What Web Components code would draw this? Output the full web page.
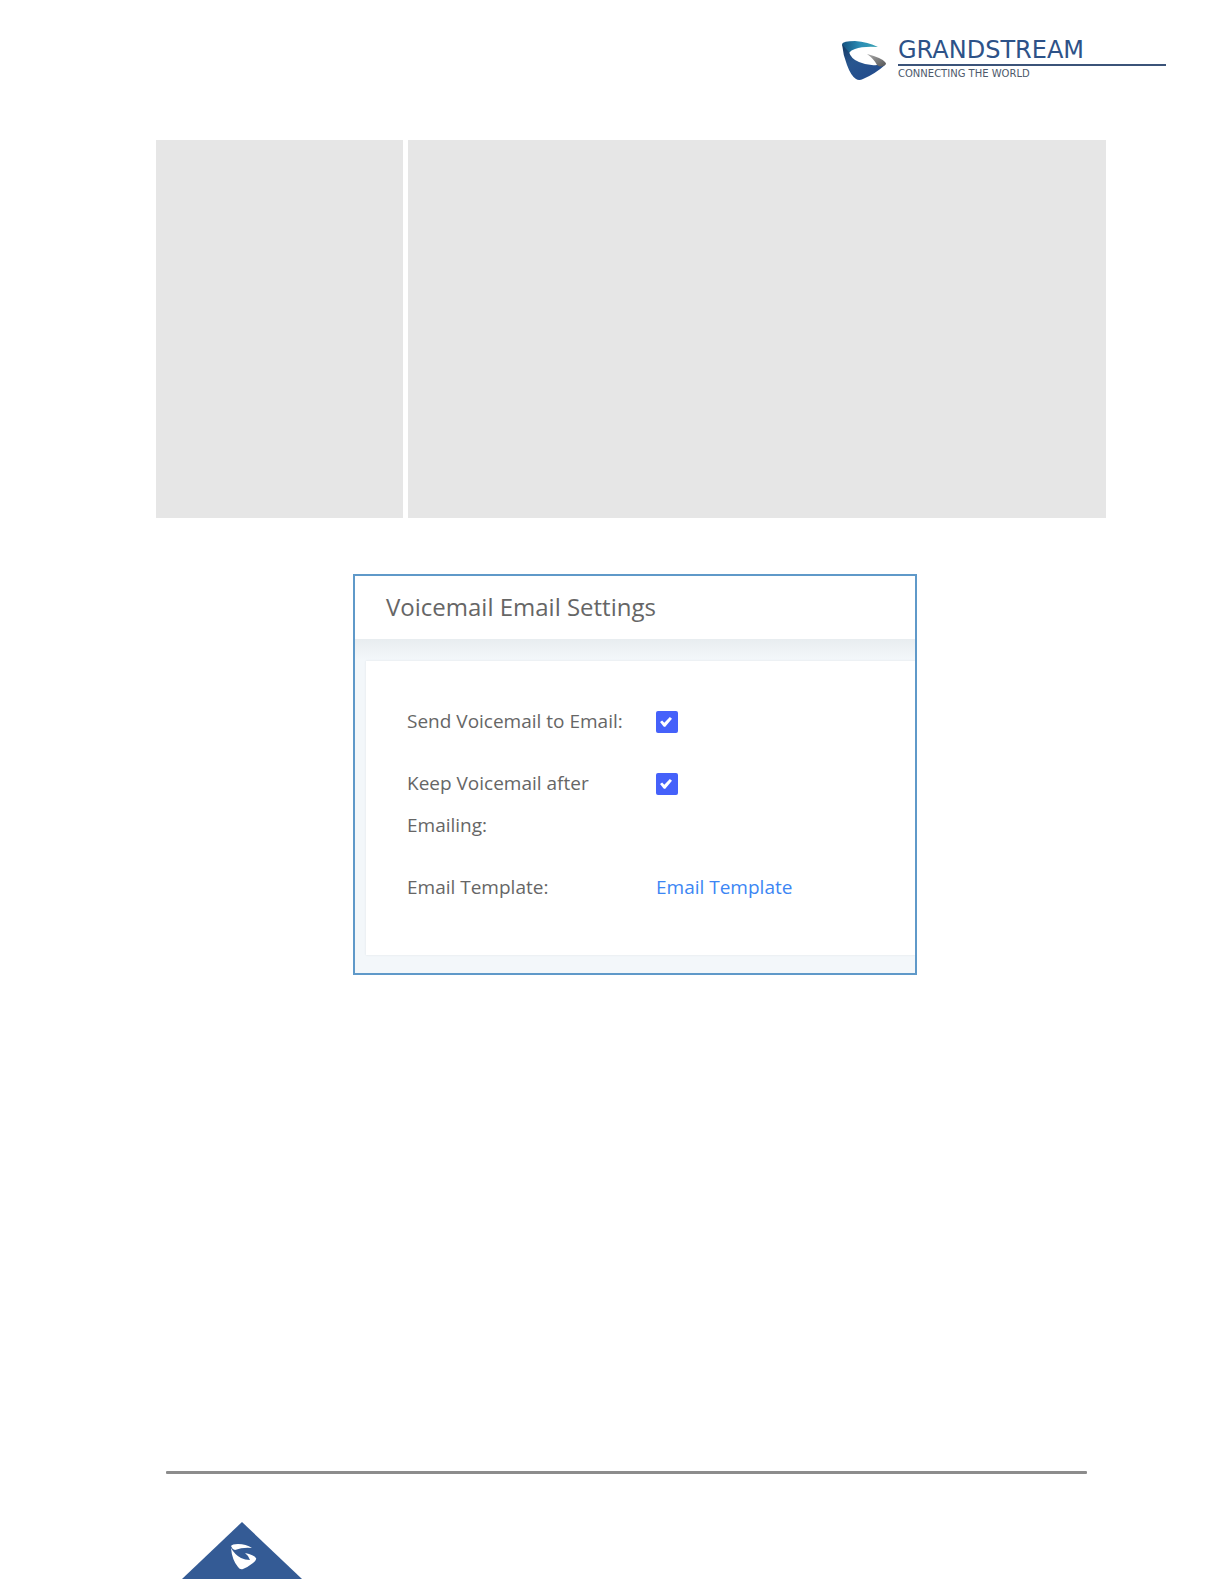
<!DOCTYPE html>
<html lang="en">
<head>
<meta charset="utf-8">
<title>Voicemail Email Settings</title>
<style>
  body {
    margin: 0;
    background: #fff;
    font-family: "Open Sans", "Noto Sans", sans-serif;
  }
</style>
</head>
<body>

<manual-page>
  <brand-logo slot="header"></brand-logo>
  <option-table></option-table>
  <settings-panel heading="Voicemail Email Settings">
    <setting-check label="Send Voicemail to Email"></setting-check>
    <setting-check label="Keep Voicemail after Emailing"></setting-check>
    <setting-link label="Email Template" text="Email Template"></setting-link>
  </settings-panel>
  <page-badge slot="footer"></page-badge>
</manual-page>

<script>
// small helper, every element here is a template in an open shadow root
function attach(el, html) {
  var template = document.createElement("template");
  template.innerHTML = html;
  el.attachShadow({mode: "open"});
  el.shadowRoot.appendChild(template.content.cloneNode(true));
}

// PAGE - header, content, footer
class ManualPage extends HTMLElement {
  constructor() {
    super();
    attach(this, `
      <style>
        :host {
          display: flex;
          flex-direction: column;
          min-height: 100vh;
        }
        header {
          display: flex;
          justify-content: flex-end;
          padding: 40px 58px 0 0;
          height: 100px;
        }
        main {
          flex: 1;
          display: flex;
          flex-direction: column;
          align-items: center;
          gap: 56px;
          padding: 0 120px 0 166px;
        }
        footer { padding: 0 137px 5px 166px; }
        hr {
          height: 3px;
          margin: 0 0 48px;
          border: 0;
          border-radius: 1px;
          background: #8c8c8c;
        }
      </style>
      <header><slot name="header"></slot></header>
      <main><slot></slot></main>
      <footer>
        <hr>
        <slot name="footer"></slot>
      </footer>
    `);
  }
}
customElements.define("manual-page", ManualPage);

// LOGO - mark, name, tagline
class BrandLogo extends HTMLElement {
  constructor() {
    super();
    attach(this, `
      <style>
        :host {
          display: flex;
          gap: 12px;
          font-family: "DejaVu Sans", sans-serif;
        }
        svg { display: block; }
        .words { width: 268px; }
        .name {
          padding-bottom: 4px;
          color: #2d5288;
          font-size: 24px;
          line-height: 20px;
          border-bottom: 2px solid #3b5379;
        }
        .tagline {
          color: #4d5a6b;
          font-size: 10px;
          line-height: 16px;
        }
      </style>
      <svg width="44" height="41" viewBox="0 0 44 41" aria-hidden="true">
        <defs>
          <linearGradient id="top" x1="0" y1="0" x2="1" y2="0">
            <stop offset="0" stop-color="#14507f"/>
            <stop offset=".5" stop-color="#2b8db5"/>
            <stop offset="1" stop-color="#3ba4b4"/>
          </linearGradient>
          <linearGradient id="side" x1="0" y1="0" x2=".7" y2="1">
            <stop offset="0" stop-color="#123760"/>
            <stop offset=".45" stop-color="#28568f"/>
            <stop offset="1" stop-color="#234b8c"/>
          </linearGradient>
          <linearGradient id="tip" x1="0" y1="0" x2="1" y2="1">
            <stop offset="0" stop-color="#aaa"/>
            <stop offset="1" stop-color="#555"/>
          </linearGradient>
        </defs>
        <path fill="url(#top)" d="M0 4Q1 1 13 1Q26 2 36 7Q21 6 13 9Q9 10 7 13Q1 9 0 4Z"/>
        <path fill="url(#side)" d="M0 4Q3 8 7 12Q9 19 17 22Q26 26 35 25L43 25Q33 34 21 39Q17 41 14 39Q9 36 5 25Q1 15 0 4Z"/>
        <path fill="url(#tip)" d="M25 14Q40 18 43 22Q45 24 43 25Q39 28 35 25Q32 19 25 14Z"/>
      </svg>
      <div class="words">
        <div class="name">GRANDSTREAM</div>
        <div class="tagline">CONNECTING THE WORLD</div>
      </div>
    `);
  }
}
customElements.define("brand-logo", BrandLogo);

// TABLE - option name on the left, description on the right
class OptionTable extends HTMLElement {
  constructor() {
    super();
    attach(this, `
      <style>
        :host {
          display: block;
          align-self: stretch;
          margin: 0 -2px 0 -10px;
        }
        table {
          width: 100%;
          border-collapse: collapse;
          table-layout: fixed;
        }
        td {
          height: 378px;
          padding: 0;
          background: #e6e6e6;
          background-clip: padding-box;
        }
        td:first-child { width: 26%; }
        td + td { border-left: 5px solid #fff; }
      </style>
      <table><tbody><tr><td></td><td></td></tr></tbody></table>
    `);
  }
}
customElements.define("option-table", OptionTable);

// PANEL - framed settings screen
class SettingsPanel extends HTMLElement {
  constructor() {
    super();
    attach(this, `
      <style>
        :host {
          display: block;
          box-sizing: border-box;
          width: 100%;
          max-width: 564px;
          border: 2px solid #5f99c9;
          background: #f3f7fa;
          color: #666;
        }
        h2 {
          margin: 0;
          padding: 0 31px 1px;
          background: #fff;
          font-size: 24px;
          font-weight: 400;
          line-height: 62px;
        }
        .body {
          padding: 22px 0 18px 11px;
          background: linear-gradient(#e8edf0, #f3f7fa 20px);
        }
        .card {
          display: flex;
          flex-direction: column;
          gap: 20px;
          padding: 39px 0 47px 41px;
          background: #fff;
          box-shadow: 0 0 2px #dfe5e8;
          clip-path: inset(-3px 0 -3px -3px);
        }
      </style>
      <h2></h2>
      <div class="body"><div class="card"><slot></slot></div></div>
    `);
  }

  connectedCallback() {
    this.shadowRoot.querySelector("h2").textContent = this.getAttribute("heading");
  }
}
customElements.define("settings-panel", SettingsPanel);

// both kinds of row share this
const row_style = `
  :host {
    display: grid;
    grid-template-columns: 224px 1fr;
    column-gap: 25px;
    font-size: 19px;
    line-height: 42px;
  }
`;

class SettingCheck extends HTMLElement {
  constructor() {
    super();
    attach(this, `
      <style>
        ${row_style}
        input {
          appearance: none;
          width: 22px;
          height: 22px;
          margin: 11px 0 9px;
          border-radius: 2px;
          background: #4561fa;
        }
        input:checked::before {
          content: "";
          display: block;
          width: 12px;
          height: 10px;
          margin: 6px 4px;
          background: #fff;
          clip-path: polygon(0 50%, 18% 34%, 36% 58%, 82% 0, 100% 18%, 42% 100%, 30% 96%);
        }
        input:not(:checked) { background: #fff; border: 1px solid #c5cad6; }
      </style>
      <label for="check"></label>
      <input type="checkbox" id="check" checked>
    `);
  }

  connectedCallback() {
    this.shadowRoot.querySelector("label").textContent = this.getAttribute("label") + ":";
  }
}
customElements.define("setting-check", SettingCheck);

class SettingLink extends HTMLElement {
  constructor() {
    super();
    attach(this, `
      <style>
        ${row_style}
        a { color: #3c86f4; text-decoration: none; }
      </style>
      <span></span>
      <div><a href="#email-template"></a></div>
    `);
  }

  connectedCallback() {
    this.shadowRoot.querySelector("span").textContent = this.getAttribute("label") + ":";
    this.shadowRoot.querySelector("a").textContent = this.getAttribute("text");
  }
}
customElements.define("setting-link", SettingLink);

// BADGE - triangle at the foot of the page
class PageBadge extends HTMLElement {
  constructor() {
    super();
    attach(this, `
      <style>
        :host { display: block; padding-left: 16px; }
        svg { display: block; }
      </style>
      <svg width="120" height="57" viewBox="0 0 120 57" aria-hidden="true">
        <path fill="#345b95" d="M60 0L120 57H0Z"/>
        <g fill="#fff">
          <path d="M49 24Q50 22 56 22Q64 22 70 26Q61 25 53 28Q50 27 49 24Z"/>
          <path d="M49 26Q53 33 59 36Q63 38 68 38Q67 34 63 31Q72 33 74 36Q75 38 71 41Q66 45 61 47Q58 48 56 45Q50 38 49 26Z"/>
        </g>
      </svg>
    `);
  }
}
customElements.define("page-badge", PageBadge);
</script>
</body>
</html>
